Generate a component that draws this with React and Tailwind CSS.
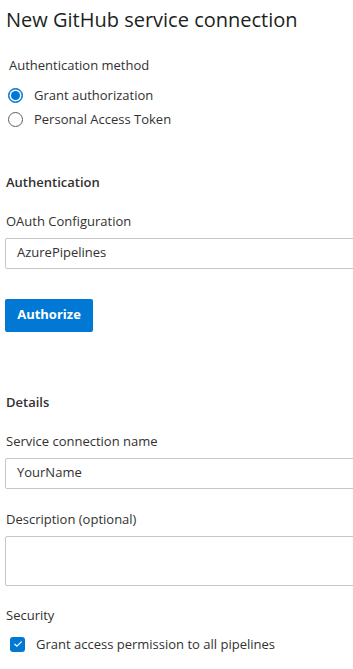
import React from 'react';

const font = { fontFamily: '"Open Sans", "Noto Sans", sans-serif' };

const Radio = ({ checked, label }) => (
  <div className="flex items-center h-6">
    <span
      className={`w-[15px] h-[15px] rounded-full border flex items-center justify-center ${
        checked ? 'border-[#0078d4] bg-[#0078d4]' : 'border-[#605e5c] bg-white'
      }`}
    >
      {checked && <span className="w-[9px] h-[9px] rounded-full bg-[#0078d4] ring-[1.5px] ring-white" />}
    </span>
    <span className="ml-[11px] text-[13px] text-[#323130]">{label}</span>
  </div>
);

const Label = ({ children, className = '' }) => (
  <div className={`text-[13px] text-[#323130] ${className}`}>{children}</div>
);

const TextBox = ({ value, className = '' }) => (
  <div className={`w-[370px] border border-[#c8c6c4] rounded-[2px] flex items-center px-[11px] text-[13px] text-[#323130] ${className}`}>
    {value}
  </div>
);

export default function App() {
  return (
    <div className="w-[353px] h-[669px] overflow-hidden bg-white" style={font}>
      <div className="pl-[5px] pt-[6px]">
        <h1 className="text-[20px] leading-[28px] text-[#201f1e] pl-[1px]">New GitHub service connection</h1>

        <Label className="mt-[22px] pl-[4px]">Authentication method</Label>
        <div className="mt-[8px] pl-[3px] flex flex-col">
          <Radio checked label="Grant authorization" />
          <Radio label="Personal Access Token" />
        </div>

        <div className="mt-[41px] pl-[1px] text-[13px] font-semibold text-[#323130]">Authentication</div>
        <Label className="mt-[20px] pl-[1px]">OAuth Configuration</Label>
        <TextBox value="AzurePipelines" className="mt-[6px] h-[31px]" />

        <button className="mt-[30px] h-[33px] w-[88px] rounded-[2px] bg-[#0078d4] text-white text-[13px] font-bold">
          Authorize
        </button>

        <div className="mt-[61px] pl-[1px] text-[13px] font-semibold text-[#323130]">Details</div>
        <Label className="mt-[20px] pl-[1px]">Service connection name</Label>
        <TextBox value="YourName" className="mt-[6px] h-[31px]" />

        <Label className="mt-[21px] pl-[1px]">Description (optional)</Label>
        <TextBox value="" className="mt-[7px] h-[50px]" />

        <Label className="mt-[20px] pl-[1px]">Security</Label>
        <div className="mt-[9px] pl-[5px] flex items-center">
          <span className="w-[15px] h-[15px] rounded-[3px] bg-[#0078d4] flex items-center justify-center">
            <svg width="10" height="10" viewBox="0 0 10 10" fill="none">
              <path d="M1.8 5.2 L4 7.2 L8.3 2.8" stroke="white" strokeWidth="1.2" strokeLinecap="round" strokeLinejoin="round" />
            </svg>
          </span>
          <span className="ml-[11px] text-[13px] text-[#323130]">Grant access permission to all pipelines</span>
        </div>
      </div>
    </div>
  );
}
